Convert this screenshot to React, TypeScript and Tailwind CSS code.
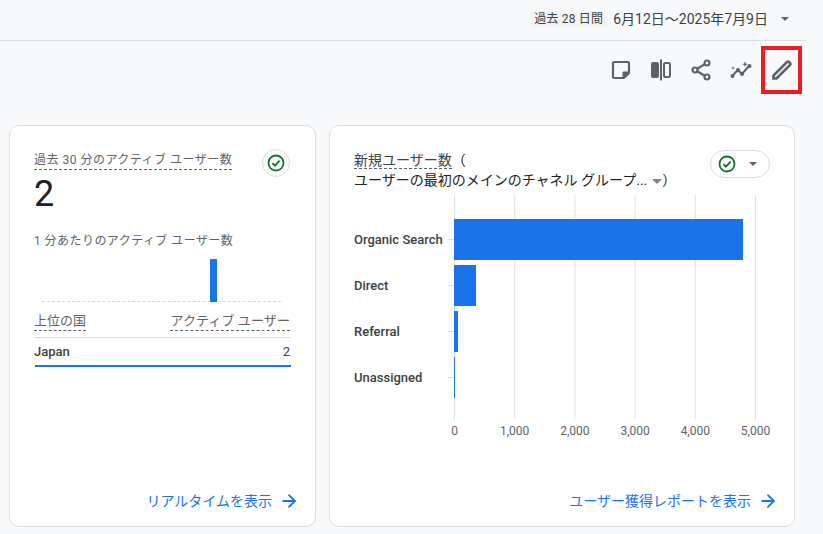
import { ArrowRight } from 'lucide-react'

const font = { fontFamily: 'Roboto, "Noto Sans CJK JP", sans-serif' }

function CheckBadge() {
  return (
    <svg viewBox="0 0 24 24" className="w-[18px] h-[18px]" fill="none">
      <circle cx="12" cy="12" r="10" stroke="#137333" strokeWidth="2.4" />
      <path d="M7.2 12.3l3.3 3.3 6.3-6.8" stroke="#137333" strokeWidth="2.4" />
    </svg>
  )
}

function Caret({ className }: { className: string }) {
  return <span className={`block w-0 h-0 border-x-[4px] border-x-transparent border-t-[4px] ${className}`} />
}

function Toolbar() {
  return (
    <div className="flex justify-end items-center h-[48px] mt-[5px] pr-[21px] text-[#5f6368]">
      <button className="w-[40px] h-[40px] flex items-center justify-center">
        <svg viewBox="0 0 24 24" className="w-6 h-6" fill="none" stroke="currentColor" strokeWidth="2.2">
          <path d="M5 4h14a1 1 0 0 1 1 1v10l-5 5H5a1 1 0 0 1-1-1V5a1 1 0 0 1 1-1z" />
          <path d="M20 14h-6v6z" fill="currentColor" strokeWidth="1" />
        </svg>
      </button>
      <button className="w-[40px] h-[40px] flex items-center justify-center">
        <svg viewBox="0 0 24 24" className="w-6 h-6" fill="none">
          <rect x="2" y="4" width="8" height="16" rx="2" fill="currentColor" />
          <rect x="11" y="1.5" width="2" height="21" fill="currentColor" />
          <rect x="15" y="5" width="6" height="14" rx="1.5" stroke="currentColor" strokeWidth="2" />
        </svg>
      </button>
      <button className="w-[40px] h-[40px] flex items-center justify-center">
        <svg viewBox="0 0 24 24" className="w-6 h-6" fill="none" stroke="currentColor" strokeWidth="2.2">
          <circle cx="18" cy="5" r="2.5" />
          <circle cx="6" cy="12" r="2.5" />
          <circle cx="18" cy="19" r="2.5" />
          <path d="M8.2 10.8l7.6-4.5M8.2 13.2l7.6 4.5" />
        </svg>
      </button>
      <button className="w-[40px] h-[40px] flex items-center justify-center">
        <svg viewBox="0 0 24 24" className="w-6 h-6" fill="none" stroke="currentColor">
          <path d="M3 18l6-6 4 4 7-8" strokeWidth="2" />
          <circle cx="3.5" cy="18" r="2" fill="currentColor" stroke="none" />
          <circle cx="9" cy="12" r="2" fill="currentColor" stroke="none" />
          <circle cx="13" cy="16" r="2" fill="currentColor" stroke="none" />
          <circle cx="20.5" cy="8" r="2" fill="currentColor" stroke="none" />
          <path d="M16 3.5l.8 2 2 .8-2 .8-.8 2-.8-2-2-.8 2-.8z" fill="currentColor" stroke="none" />
          <path d="M4 8l.5 1.5L6 10l-1.5.5L4 12l-.5-1.5L2 10l1.5-.5z" fill="currentColor" stroke="none" />
        </svg>
      </button>
      <button className="w-[41px] h-[48px] flex items-center justify-center border-[4px] border-[#ed1c24]">
        <svg viewBox="0 0 24 24" className="w-6 h-6" fill="none" stroke="currentColor" strokeWidth="2.6">
          <path d="M3.5 20.5v-3L17 4a1.4 1.4 0 0 1 2 0l1 1a1.4 1.4 0 0 1 0 2L6.5 20.5z" />
        </svg>
      </button>
    </div>
  )
}

function RealtimeCard() {
  return (
    <div className="w-[307px] h-[402px] bg-white border border-[#dadce0] rounded-[10px] pt-[21px] px-[24px] pb-[15px] flex flex-col">
      <div className="flex justify-between items-start">
        <div>
          <div className="inline-block text-[12px] leading-[17px] tracking-[0.5px] text-[#5f6368] border-b border-dashed border-[#5f6368]">
            過去 30 分のアクティブ ユーザー数
          </div>
          <div className="text-[36px] leading-[44px] mt-[1px] text-[#202124]">2</div>
        </div>
        <div className="w-[28px] h-[28px] mt-[2px] mr-[1px] rounded-full border border-[#dadce0] flex items-center justify-center">
          <CheckBadge />
        </div>
      </div>
      <div className="mt-[17px] text-[12px] leading-[17px] tracking-[0.45px] text-[#5f6368]">1 分あたりのアクティブ ユーザー数</div>
      <div className="relative mt-[9px] ml-[8px] w-[239px] h-[43px] border-b border-dashed border-[#d5d7d9]">
        <div className="absolute left-[168px] bottom-[-1px] w-[7px] h-[43px] bg-[#1a73e8]" />
      </div>
      <div className="mt-[10px] mr-[1px] flex justify-between text-[13px] leading-[18px] text-[#5f6368] border-b border-[#dadce0] pb-[6px]">
        <span className="border-b border-dashed border-[#5f6368]">上位の国</span>
        <span className="border-b border-dashed border-[#5f6368] tracking-[0.1px]">アクティブ ユーザー</span>
      </div>
      <div className="flex justify-between text-[13px] leading-[16px] text-[#3c4043] mt-[6px]">
        <span className="font-medium">Japan</span>
        <span className="pr-[1px]">2</span>
      </div>
      <div className="h-[2px] mt-[5px] ml-[1px] bg-[#1a73e8]" />
      <div className="mt-auto flex justify-end items-center gap-[7px] text-[14px] leading-[20px] text-[#1a73e8] mr-[-8px]">
        リアルタイムを表示
        <ArrowRight size={20} strokeWidth={2.2} />
      </div>
    </div>
  )
}

const rows = [
  { label: 'Organic Search', y: 24, w: 289 },
  { label: 'Direct', y: 70, w: 22 },
  { label: 'Referral', y: 116, w: 4 },
  { label: 'Unassigned', y: 162, w: 1 },
]
const ticks = ['0', '1,000', '2,000', '3,000', '4,000', '5,000']

function ChannelChart() {
  return (
    <svg viewBox="0 0 466 250" className="w-[466px] h-[250px] -ml-[24px] mt-[5px]" style={font}>
      {ticks.map((t, i) => (
        <g key={t}>
          <line x1={124.5 + i * 60.2} x2={124.5 + i * 60.2} y1={0} y2={225} stroke="#e0e0e0" />
          <text x={124.5 + i * 60.2} y={240} textAnchor="middle" fontSize="12" fill="#5f6368">{t}</text>
        </g>
      ))}
      {rows.map(r => (
        <g key={r.label}>
          <line x1={118} x2={124} y1={r.y + 20.5} y2={r.y + 20.5} stroke="#dadce0" />
          <rect x={124} y={r.y} width={r.w} height={41} fill="#1a73e8" />
          <text x={24} y={r.y + 25} fontSize="13" fontWeight="500" fill="#3c4043">{r.label}</text>
        </g>
      ))}
    </svg>
  )
}

function AcquisitionCard() {
  return (
    <div className="w-[466px] h-[402px] bg-white border border-[#dadce0] rounded-[10px] pt-[24px] px-[24px] pb-[15px] flex flex-col">
      <div className="flex justify-between items-start">
        <div className="text-[14px] leading-[20px] text-[#202124]">
          <div><span className="text-[#3c4043] border-b border-dashed border-[#5f6368]">新規ユーザー数</span>（</div>
          <div className="flex items-center">
            ユーザーの最初のメインのチャネル グループ...
            <span className="block w-0 h-0 ml-[5px] mt-[2px] border-x-[5px] border-x-transparent border-t-[5px] border-t-[#80868b]" />
            <span>）</span>
          </div>
        </div>
        <div className="w-[60px] h-[28px] rounded-full border border-[#dadce0] flex items-center justify-between pl-[7px] pr-[12px]">
          <CheckBadge />
          <Caret className="border-t-[#5f6368]" />
        </div>
      </div>
      <ChannelChart />
      <div className="mt-auto flex justify-end items-center gap-[7px] text-[14px] leading-[20px] text-[#1a73e8] mr-[-8px]">
        ユーザー獲得レポートを表示
        <ArrowRight size={20} strokeWidth={2.2} />
      </div>
    </div>
  )
}

export default function App() {
  return (
    <div className="w-[823px] h-[534px] overflow-hidden bg-[#f8f9fa]" style={font}>
      <div className="w-[806px] h-[41px] border-b border-[#dadce0] flex items-center justify-end pr-[17px] pb-[2px]">
        <span className="bg-[#f1f3f4] text-[12px] leading-[16px] tracking-[0.2px] text-[#3c4043] px-[4px]">過去 28 日間</span>
        <span className="ml-[6px] text-[14px] text-[#3c4043]">6月12日～2025年7月9日</span>
        <Caret className="border-t-[#5f6368] ml-[13px]" />
      </div>
      <Toolbar />
      <div className="flex gap-[13px] pl-[9px] mt-[31px]">
        <RealtimeCard />
        <AcquisitionCard />
      </div>
    </div>
  )
}
